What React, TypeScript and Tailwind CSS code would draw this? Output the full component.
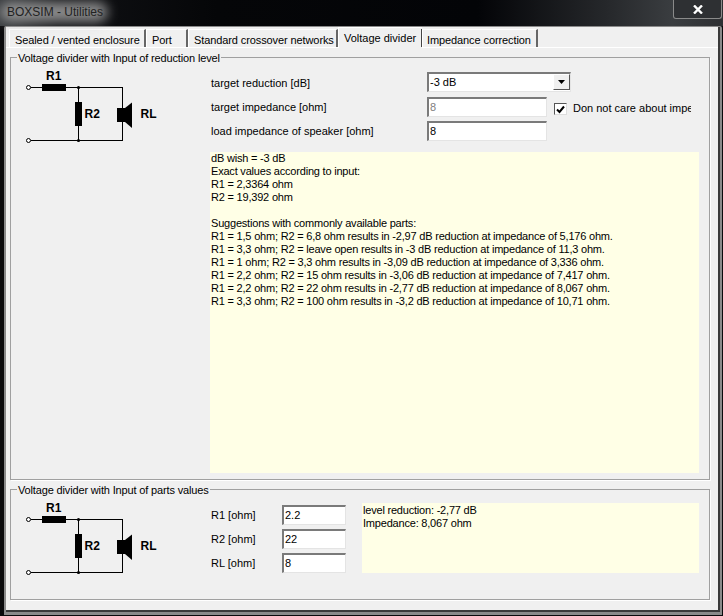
import React from "react";

const Diagram = () => (
  <svg width="140" height="80" viewBox="0 0 140 80" className="block shrink-0">
    <g stroke="#000" strokeWidth="1" fill="none" shapeRendering="crispEdges">
      <path d="M11 22.5H22M46 22.5H102.5V75.5H11M58.5 22.5V37M58.5 61V75.5" />
    </g>
    <circle cx="8.5" cy="22.5" r="2" fill="#fff" stroke="#000" />
    <circle cx="8.5" cy="75.5" r="2" fill="#fff" stroke="#000" />
    <rect x="22" y="19" width="24" height="7" fill="#000" />
    <rect x="55" y="37" width="7" height="24" fill="#000" />
    <circle cx="58.5" cy="22.5" r="1.6" fill="#000" />
    <circle cx="58.5" cy="75.5" r="1.6" fill="#000" />
    <rect x="97" y="43" width="8" height="14" fill="#000" />
    <path d="M105 43L112 37.5V63L105 57Z" fill="#000" />
    <text x="26" y="15" fontSize="12" fontWeight="700" fontFamily="Liberation Sans, sans-serif">R1</text>
    <text x="64.5" y="53" fontSize="12" fontWeight="700" fontFamily="Liberation Sans, sans-serif">R2</text>
    <text x="120.5" y="53" fontSize="12" fontWeight="700" fontFamily="Liberation Sans, sans-serif">RL</text>
  </svg>
);

const Tab = ({ label, w, pad = "pl-[5px]" }: { label: string; w: string; pad?: string }) => (
  <div className={`${w} ${pad} h-[18px] bg-[#f0f0f0] border-t border-l border-[#fff] border-r-2 border-r-[#666] pt-[3px] leading-[14px] tracking-[-0.1px] whitespace-nowrap`}>
    {label}
  </div>
);

const ActiveTab = ({ label, w }: { label: string; w: string }) => (
  <div className={`${w} h-[21px] bg-[#f0f0f0] border-t border-l border-[#fff] pl-[5px] pt-[3px] leading-[15px] relative z-10 -mb-[1px] whitespace-nowrap`}>
    {label}
    <span className="absolute right-0 top-[1px] bottom-[1px] w-[1px] bg-[#444]" />
  </div>
);

const Field = ({ value, w, gray }: { value: string; w: string; gray?: boolean }) => (
  <div
    className={`${w} h-[20px] bg-white border-t-2 border-l-2 border-t-[#7a7a7a] border-l-[#7a7a7a] border-r border-b border-r-[#e4e4e4] border-b-[#e4e4e4] pl-[1px] leading-[16px] ${gray ? "text-[#808080]" : "text-black"}`}
  >
    {value}
  </div>
);

const Group = ({ title, className, children }: { title: string; className: string; children: React.ReactNode }) => (
  <div className={`relative border border-[#a0a0a0] shadow-[1px_1px_0_#fff] ${className}`}>
    <span className="absolute left-[6px] -top-[7px] bg-[#f0f0f0] px-[1px] leading-[14px] tracking-[-0.15px]">{title}</span>
    {children}
  </div>
);

const main = [
  "dB wish = -3 dB",
  "Exact values according to input:",
  "R1 = 2,3364 ohm",
  "R2 = 19,392 ohm",
  "\u00a0",
  "Suggestions with commonly available parts:",
  "R1 = 1,5 ohm; R2 = 6,8 ohm results in -2,97 dB reduction at impedance of 5,176 ohm.",
  "R1 = 3,3 ohm; R2 = leave open results in -3 dB reduction at impedance of 11,3 ohm.",
  "R1 = 1 ohm; R2 = 3,3 ohm results in -3,09 dB reduction at impedance of 3,336 ohm.",
  "R1 = 2,2 ohm; R2 = 15 ohm results in -3,06 dB reduction at impedance of 7,417 ohm.",
  "R1 = 2,2 ohm; R2 = 22 ohm results in -2,77 dB reduction at impedance of 8,067 ohm.",
  "R1 = 3,3 ohm; R2 = 100 ohm results in -3,2 dB reduction at impedance of 10,71 ohm.",
];

export default function App() {
  return (
    <div className="w-[723px] h-[616px] overflow-hidden bg-[#0a0a0c] text-[11px] text-black font-['Liberation_Sans',Arial,sans-serif] flex flex-col relative">
      {/* title bar */}
      <div className="h-[26px] shrink-0 relative bg-[linear-gradient(90deg,#3a3d40_0%,#101114_8%,#050608_30%,#030407_66%,#26282b_84%,#3a3d40_93%,#2e3033_100%)] flex items-start justify-between">
        <div className="absolute left-0 top-[2px] w-[108px] h-[20px] rounded-full bg-[#a8a8a8] blur-[6px] opacity-80" />
        <span className="relative ml-[7px] mt-[5px] text-[12px] leading-[15px] text-[#222]">BOXSIM - Utilities</span>
        <div className="relative mr-[1px] w-[49px] h-[19px] border border-t-0 border-[#8a8a8a] rounded-b-[3px] bg-[#2e3033] flex items-center justify-center">
          <svg width="10" height="9" viewBox="0 0 10 9"><path d="M1 0.5L9 8.5M9 0.5L1 8.5" stroke="#fff" strokeWidth="2.4" /></svg>
        </div>
      </div>
      {/* client */}
      <div className="ml-[4px] w-[718px] h-[589px] border-t border-l-2 border-r-2 border-b-[3px] border-[#8a8a8a] rounded-t-[2px] flex">
        <div className="flex-1 bg-[#f0f0f0] border-r-2 border-b-2 border-[#3a3a3a] flex flex-col">
          <div className="flex items-end h-[21px] pl-[3px] shrink-0 border-b border-white">
            <Tab label="Sealed / vented enclosure" w="w-[137px]" />
            <Tab label="Port" w="w-[42px]" />
            <Tab label="Standard crossover networks" w="w-[150px]" />
            <ActiveTab label="Voltage divider" w="w-[84px]" />
            <Tab label="Impedance correction" w="w-[116px]" pad="pl-[4px]" />
          </div>
          <div className="flex-1 pl-[4px] pt-[9px] flex flex-col">
            <Group title="Voltage divider with Input of reduction level" className="h-[423px] w-[700px] flex">
              <div className="pl-[9px] pt-[7px] w-[199px] shrink-0">
                <Diagram />
              </div>
              <div className="flex-1 pt-[14px] flex flex-col">
                <div className="flex h-[25px] pl-[1px]">
                  <div className="w-[216px] pt-[4px] leading-[14px]">target reduction [dB]</div>
                  <div className="w-[144px] h-[20px] bg-white border-t-2 border-l-2 border-[#7a7a7a] border-r border-b border-r-[#e4e4e4] border-b-[#e4e4e4] flex justify-between pl-[1px] leading-[16px]">
                    -3 dB
                    <div className="w-[17px] h-[16px] bg-[#f0f0f0] border border-r-[#555] border-b-[#555] border-t-white border-l-white flex items-center justify-center">
                      <svg width="7" height="4" viewBox="0 0 7 4"><path d="M0 0H7L3.5 4Z" fill="#000" /></svg>
                    </div>
                  </div>
                </div>
                <div className="flex h-[24px] pl-[1px]">
                  <div className="w-[216px] pt-[3px] leading-[14px]">target impedance [ohm]</div>
                  <Field value="8" w="w-[120px]" gray />
                  <div className="ml-[7px] mt-[6px] w-[13px] h-[12px] bg-white border border-[#555] border-r-[#ddd] border-b-[#ddd] flex items-center justify-center shrink-0">
                    <svg width="9" height="9" viewBox="0 0 9 9"><path d="M1 4.5L3.5 7L8 1.5" stroke="#000" strokeWidth="2" fill="none" /></svg>
                  </div>
                  <div className="ml-[6px] pt-[4px] leading-[14px] w-[118px] overflow-hidden whitespace-nowrap">Don not care about impedance</div>
                </div>
                <div className="flex h-[24px] pl-[1px]">
                  <div className="w-[216px] pt-[3px] leading-[14px]">load impedance of speaker [ohm]</div>
                  <Field value="8" w="w-[120px]" />
                </div>
                <div className="mt-[7px] w-[489px] h-[321px] bg-[#ffffe6] pl-[1px] leading-[13px] tracking-[-0.2px]">
                  {main.map((line, i) => (
                    <div key={i} className="whitespace-nowrap">{line}</div>
                  ))}
                </div>
              </div>
            </Group>
            <Group title="Voltage divider with Input of parts values" className="mt-[9px] h-[111px] w-[700px] flex">
              <div className="pl-[9px] pt-[7px] w-[199px] shrink-0">
                <Diagram />
              </div>
              <div className="pt-[15px] pl-[1px] w-[152px] shrink-0">
                {["2.2", "22", "8"].map((v, i) => (
                  <div key={i} className="flex h-[24px]">
                    <div className="w-[71px] pt-[3px] leading-[14px]">{["R1", "R2", "RL"][i]} [ohm]</div>
                    <Field value={v} w="w-[64px]" />
                  </div>
                ))}
              </div>
              <div className="mt-[13px] w-[337px] h-[70px] bg-[#ffffe6] pl-[1px] pt-[1px] leading-[13px] tracking-[-0.2px]">
                <div>level reduction: -2,77 dB</div>
                <div>Impedance: 8,067 ohm</div>
              </div>
            </Group>
          </div>
        </div>
      </div>
    </div>
  );
}
